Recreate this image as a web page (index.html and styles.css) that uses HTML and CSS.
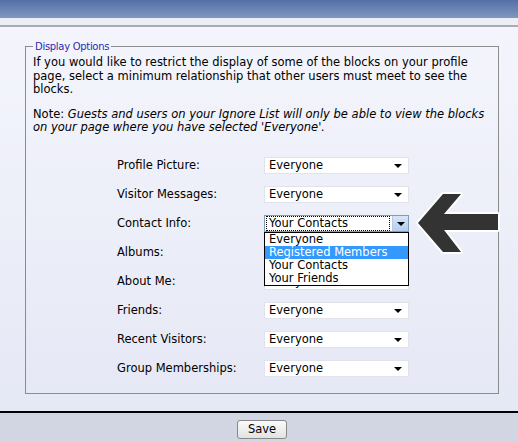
FILE: index.html
```html
<!DOCTYPE html>
<html lang="en">
<head>
    <meta charset="UTF-8">
    <title>Display Options</title>
    <link rel="stylesheet" href="styles.css">
</head>
<body>
    <div class="topbar"></div>
    <div class="subbar"></div>
    <div class="page">
        <fieldset class="options">
            <legend>Display Options</legend>
            <p>If you would like to restrict the display of some of the blocks on your profile page, select a minimum relationship that other users must meet to see the blocks.</p>
            <p>Note: <em>Guests and users on your Ignore List will only be able to view the blocks on your page where you have selected 'Everyone'.</em></p>

            <div class="rows">
                <div class="row">
                    <label>Profile Picture:</label>
                    <div class="select"><span>Everyone</span><i class="caret"></i></div>
                </div>
                <div class="row">
                    <label>Visitor Messages:</label>
                    <div class="select"><span>Everyone</span><i class="caret"></i></div>
                </div>
                <div class="row">
                    <label>Contact Info:</label>
                    <div class="select open">
                        <span class="focus">Your Contacts</span><b class="btn"><i class="caret"></i></b>
                        <ul class="menu">
                            <li>Everyone</li>
                            <li class="hl">Registered Members</li>
                            <li>Your Contacts</li>
                            <li>Your Friends</li>
                        </ul>
                    </div>
                </div>
                <div class="row">
                    <label>Albums:</label>
                    <div class="select"><span>Everyone</span><i class="caret"></i></div>
                </div>
                <div class="row">
                    <label>About Me:</label>
                    <div class="select"><span>Everyone</span><i class="caret"></i></div>
                </div>
                <div class="row">
                    <label>Friends:</label>
                    <div class="select"><span>Everyone</span><i class="caret"></i></div>
                </div>
                <div class="row">
                    <label>Recent Visitors:</label>
                    <div class="select"><span>Everyone</span><i class="caret"></i></div>
                </div>
                <div class="row">
                    <label>Group Memberships:</label>
                    <div class="select"><span>Everyone</span><i class="caret"></i></div>
                </div>
            </div>
        </fieldset>

        <svg class="pointer" width="100" height="80" viewBox="410 186 100 80">
            <polygon points="418,222 443,193 461,193 444,213 498,213 498,229 444,229 461,251 443,251"
                     fill="#333" stroke="#fff" stroke-width="4" stroke-linejoin="round" paint-order="stroke"/>
        </svg>
    </div>
    <div class="footer">
        <button>Save</button>
    </div>
</body>
</html>
```

FILE: styles.css
```css
body {
    margin: 0;
    font-family: "DejaVu Sans", Verdana, sans-serif;
    font-size: 11.5px;
    color: #000;
    background: #e6e9f5;
}
.topbar {
    height: 18px;
    background: linear-gradient(#5370a6, #7f97c1);
}
.subbar {
    height: 7px;
    background: #eceef6;
    border-bottom: 2px solid #a9abb3;
}
.page {
    position: relative;
    padding: 13px 19px 17px 25px;
    background: linear-gradient(#f4f5fc, #e5e8f5);
}
.options {
    margin: 0;
    padding: 3px 7px 16px 7px;
    border: 1px solid #8c8c8c;
}
legend {
    color: #2b2bb3;
    font-size: 10px;
    letter-spacing: -0.3px;
    line-height: 13px;
    padding: 0 2px;
    margin-left: 0;
}
p {
    margin: 0 0 11px;
    line-height: 13.5px;
}
.rows {
    padding: 11px 0 0 84px;
}
.row {
    display: flex;
    align-items: center;
    height: 17px;
    margin-bottom: 12px;
}
.row:last-child {
    margin-bottom: 0;
}
.row label {
    width: 147px;
}
.select {
    position: relative;
    width: 139px;
    height: 15px;
    border: 1px solid #e2e3ea;
    background: #fff;
    display: flex;
    align-items: center;
    padding-left: 4px;
}
.select span {
    flex: 1;
}
.caret {
    width: 0;
    height: 0;
    border-left: 4px solid transparent;
    border-right: 4px solid transparent;
    border-top: 4px solid #000;
    margin-right: 6px;
    margin-top: 2px;
}
.select.open {
    border-color: #7f9db9;
    padding-left: 1px;
    width: 142px;
}
.select .focus {
    border: 1px dotted #000;
    padding-left: 2px;
    line-height: 13px;
    margin-right: 2px;
}
.btn {
    width: 15px;
    height: 15px;
    background: linear-gradient(#d7e6fa, #b2cdf0);
    border-left: 1px solid #b8cbe2;
    display: flex;
    align-items: center;
    justify-content: center;
}
.btn .caret {
    margin: 2px 0 0;
}
.menu {
    position: absolute;
    left: -1px;
    top: 16px;
    width: 143px;
    margin: 0;
    padding: 0;
    list-style: none;
    background: #fff;
    border: 1px solid #000;
    line-height: 13px;
    z-index: 2;
}
.menu li {
    padding-left: 4px;
}
.menu li.hl {
    background: #3399ff;
    color: #fff;
}
.pointer {
    position: absolute;
    left: 410px;
    top: 160px;
}
.footer {
    border-top: 2px solid #000;
    background: #d2d5e2;
    text-align: center;
    padding: 7px 0 0 6px;
    height: 30px;
}
button {
    font-family: "DejaVu Sans", Verdana, sans-serif;
    font-size: 11.5px;
    width: 50px;
    height: 19px;
    padding: 0;
    border: 1px solid #888;
    border-radius: 3px;
    background: linear-gradient(#fbfbfb, #e2e2e2);
}
```
